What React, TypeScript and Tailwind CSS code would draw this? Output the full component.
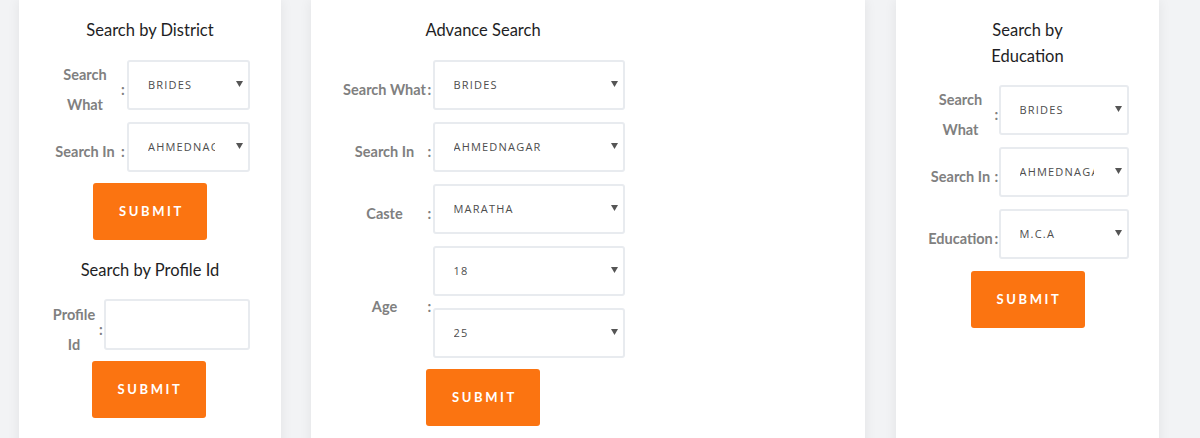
import type { ReactNode } from 'react'

const labelFont = "font-['Lato','Liberation_Sans',sans-serif]"

function Caret() {
  return (
    <svg width="7" height="6" viewBox="0 0 7 6" className="mb-[3px] ml-[21px] shrink-0">
      <path d="M0 0H7L3.5 6Z" fill="#555" />
    </svg>
  )
}

function FakeSelect({ value, width }: { value: string; width: string }) {
  return (
    <div
      className={`flex h-[50px] items-center rounded-[3px] border-2 border-[#e8ebef] bg-white pl-[19px] pr-[5px] ${width}`}
    >
      <span className="flex-1 overflow-hidden whitespace-nowrap font-['Open_Sans',sans-serif] text-[11px] tracking-[1.2px] text-[#4d4d4d]">
        {value}
      </span>
      <Caret />
    </div>
  )
}

type RowProps = {
  label: ReactNode
  labelWidth: string
  colonWidth: string
  children: ReactNode
}

function FormRow({ label, labelWidth, colonWidth, children }: RowProps) {
  return (
    <div className="flex items-center">
      <div
        className={`${labelWidth} ${labelFont} text-center text-[14.5px] font-bold leading-[30px] text-[#808080]`}
      >
        {label}
      </div>
      <span className={`${colonWidth} ${labelFont} text-[14.5px] font-bold text-[#808080]`}>:</span>
      <div className="mb-[10px] flex flex-col gap-[12px]">{children}</div>
    </div>
  )
}

function Title({ children, className = '' }: { children: ReactNode; className?: string }) {
  return (
    <h3
      className={`${labelFont} text-center text-[16.5px] leading-[26px] text-[#1e1e24] ${className}`}
    >
      {children}
    </h3>
  )
}

function SubmitButton({ className = '' }: { className?: string }) {
  return (
    <button
      className={`h-[57px] w-[114px] rounded-[3px] bg-[#fb7411] pl-[3px] ${labelFont} text-[13px] font-bold tracking-[2.6px] text-white ${className}`}
    >
      SUBMIT
    </button>
  )
}

function Card({ width, children }: { width: string; children: ReactNode }) {
  return (
    <div className={`${width} h-[470px] shrink-0 bg-white shadow-[0_0_12px_rgba(0,0,0,0.07)]`}>
      {children}
    </div>
  )
}

export default function App() {
  return (
    <div className="flex h-[438px] gap-[30px] overflow-hidden bg-[#f2f3f5] pl-[19px]">
      <Card width="w-[262px]">
        <div className="flex flex-col items-center">
          <Title className="mb-[17px] pt-[17px]">Search by District</Title>
          <div className="flex flex-col gap-[2px]">
            <FormRow
              label={
                <>
                  Search
                  <br />
                  What
                </>
              }
              labelWidth="w-[70px]"
              colonWidth="w-[7px] pl-[1px]"
            >
              <FakeSelect value="BRIDES" width="w-[123px]" />
            </FormRow>
            <FormRow label="Search In" labelWidth="w-[70px]" colonWidth="w-[7px] pl-[1px]">
              <FakeSelect value="AHMEDNAGAR" width="w-[123px]" />
            </FormRow>
          </div>
          <SubmitButton className="mt-[1px]" />

          <Title className="mb-[16px] mt-[17px]">Search by Profile Id</Title>
          <FormRow
            label={
              <>
                Profile
                <br />
                Id
              </>
            }
            labelWidth="w-[48px]"
            colonWidth="w-[6px] pl-[1px]"
          >
            <div className="h-[51px] w-[146px] rounded-[3px] border-2 border-[#e8ebef] bg-white" />
          </FormRow>
          <SubmitButton className="mr-[3px] mt-[1px]" />
        </div>
      </Card>

      <Card width="w-[554px]">
        <div className="flex w-[344px] flex-col items-center">
          <Title className="mb-[17px] pt-[17px]">Advance Search</Title>
          <div className="flex flex-col gap-[2px]">
            <FormRow label="Search What" labelWidth="w-[86px]" colonWidth="w-[5px]">
              <FakeSelect value="BRIDES" width="w-[192px]" />
            </FormRow>
            <FormRow label="Search In" labelWidth="w-[86px]" colonWidth="w-[5px]">
              <FakeSelect value="AHMEDNAGAR" width="w-[192px]" />
            </FormRow>
            <FormRow label="Caste" labelWidth="w-[86px]" colonWidth="w-[5px]">
              <FakeSelect value="MARATHA" width="w-[192px]" />
            </FormRow>
            <FormRow label="Age" labelWidth="w-[86px]" colonWidth="w-[5px]">
              <FakeSelect value="18" width="w-[192px]" />
              <FakeSelect value="25" width="w-[192px]" />
            </FormRow>
          </div>
          <SubmitButton className="mt-[1px]" />
        </div>
      </Card>

      <div className="ml-[1px]">
        <Card width="w-[263px]">
          <div className="flex flex-col items-center">
            <Title className="mb-[16px] pt-[17px]">
              Search by
              <br />
              Education
            </Title>
            <div className="flex flex-col gap-[2px]">
              <FormRow
                label={
                  <>
                    Search
                    <br />
                    What
                  </>
                }
                labelWidth="w-[68px]"
                colonWidth="w-[4px]"
              >
                <FakeSelect value="BRIDES" width="w-[130px]" />
              </FormRow>
              <FormRow label="Search In" labelWidth="w-[68px]" colonWidth="w-[4px]">
                <FakeSelect value="AHMEDNAGAR" width="w-[130px]" />
              </FormRow>
              <FormRow label="Education" labelWidth="w-[68px]" colonWidth="w-[4px]">
                <FakeSelect value="M.C.A" width="w-[130px]" />
              </FormRow>
            </div>
            <SubmitButton className="mt-[2px]" />
          </div>
        </Card>
      </div>
    </div>
  )
}
